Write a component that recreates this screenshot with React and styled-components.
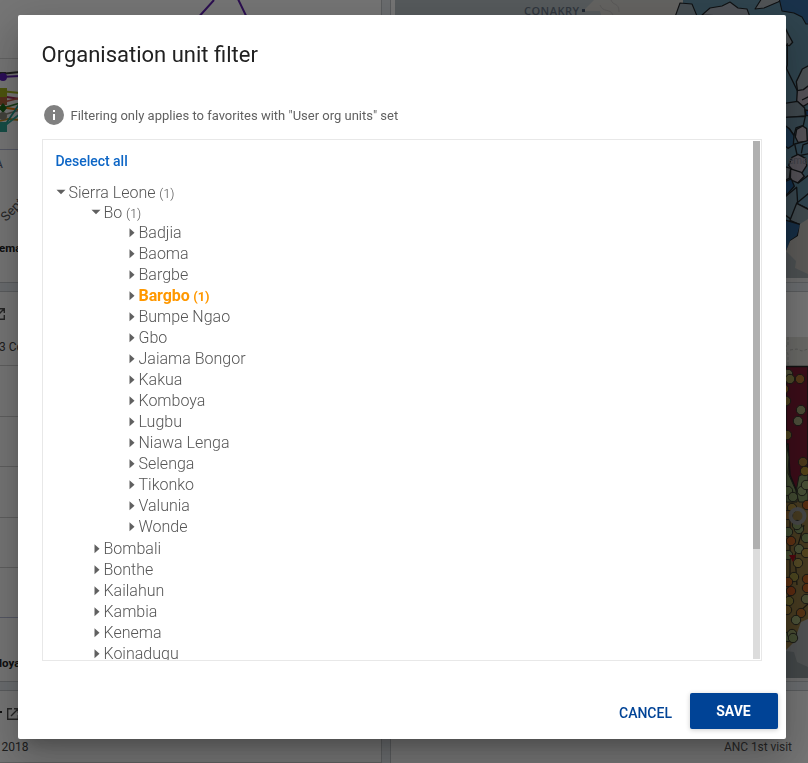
import React from "react";
import styled, { createGlobalStyle, css } from "styled-components";

const GlobalStyle = createGlobalStyle`
  *, *::before, *::after { box-sizing: border-box; }
  body { margin: 0; overflow: hidden; font-family: Roboto, sans-serif; }
`;

const Page = styled.div`
  height: 100vh;
  overflow: hidden;
  background: #e8edf2;
`;

const Dashboard = styled.main`
  display: grid;
  grid-template-columns: 382px 1fr;
  grid-template-rows: 283px 391px 1fr;
  gap: 8px;
  height: 100%;
`;

const Panel = styled.section`
  overflow: hidden;
  background: #fff;
  border: solid #c4c8cc;
  border-width: ${(p) => (p.$side === "left" ? "1px 1px 1px 0" : "1px 0 1px 1px")};
  ${(p) => p.$top && css`border-top: 0;`}
  ${(p) => p.$bottom && css`border-bottom: 0;`}
  min-width: 0;
  min-height: 0;
`;

const Drawing = styled.svg`
  display: block;
  width: 100%;
  height: 100%;
  font-family: Roboto, sans-serif;
`;

const Scrim = styled.div`
  position: fixed;
  inset: 0;
  display: flex;
  align-items: flex-start;
  padding: 15px 22px 24px 18px;
  background: rgba(0, 0, 0, 0.54);
`;

const Dialog = styled.div`
  display: flex;
  flex-direction: column;
  width: 768px;
  height: 724px;
  border-radius: 2px;
  background: #fff;
  box-shadow: 0 11px 15px -7px rgba(0, 0, 0, 0.2), 0 24px 38px 3px rgba(0, 0, 0, 0.14),
    0 9px 46px 8px rgba(0, 0, 0, 0.12);
`;

const Title = styled.h2`
  margin: 0;
  padding: 25px 24px 0 23.5px;
  height: 86px;
  font-size: 22px;
  font-weight: 400;
  line-height: 30px;
  color: #212121;
`;

const Hint = styled.div`
  display: flex;
  align-items: center;
  gap: 4.5px;
  height: 28px;
  padding-left: 24px;
  font-size: 13px;
  color: #616161;

  svg { width: 24px; height: 24px; fill: #808080; }
`;

const TreeBox = styled.div`
  display: flex;
  justify-content: space-between;
  height: 522px;
  margin: 10px 24px 0;
  padding: 1px 1px 1px 0;
  border: 1px solid #e8e8e8;
  overflow: hidden;
`;

const TreeContent = styled.div`
  height: 519px;
  padding: 11px 0 0 12.5px;
  overflow: hidden;
`;

const Deselect = styled.button`
  display: block;
  height: 18px;
  padding: 0;
  margin-bottom: 12px;
  border: 0;
  background: none;
  font: 500 14px/18px Roboto, sans-serif;
  letter-spacing: -0.03px;
  color: #0d66c6;
`;

const Scrollbar = styled.div`
  width: 7px;
  height: 518px;
  background: #dcdcdc;
`;

const Thumb = styled.div`
  height: 408px;
  background: #b0b0b0;
`;

const Branch = styled.div`
  padding-left: ${(p) => (p.$root ? 0 : 35)}px;
  padding-bottom: ${(p) => (p.$spaced ? 1 : 0)}px;
`;

const Row = styled.div`
  display: flex;
  align-items: center;
  height: ${(p) => (p.$open ? 20 : 21)}px;
  font-size: 16px;
  font-weight: ${(p) => (p.$selected ? 700 : 300)};
  color: ${(p) => (p.$selected ? "#ff9800" : "#555")};
  letter-spacing: ${(p) => (p.$selected ? "-0.08px" : "normal")};
  white-space: pre;

  svg { width: 12px; height: 10px; margin-right: 1px; fill: #606060; }
`;

const Count = styled.span`
  margin-top: 2px;
  margin-left: 0.5px;
  font-size: 12.8px;
`;

const Actions = styled.div`
  display: flex;
  align-items: center;
  justify-content: flex-end;
  margin-top: auto;
  padding: 0 8px 10px;
`;

const Button = styled.button`
  height: 36px;
  padding: ${(p) => (p.$primary ? "0 1px 1px 0" : "3px 1px 0 0")};
  width: 88px;
  border: 0;
  border-radius: 2px;
  font: ${(p) => (p.$primary ? 700 : 500)} 14px Roboto, sans-serif;
  background: ${(p) => (p.$primary ? "#004396" : "transparent")};
  color: ${(p) => (p.$primary ? "#fff" : "#004396")};
  box-shadow: ${(p) => (p.$primary ? "0 1px 5px rgba(0,0,0,.2)" : "none")};
`;

const Caret = ({ open }) => (
  <svg viewBox="0 0 12 10" aria-hidden="true">
    <path d={open ? "M.5 2.7h9L5 7.3z" : "M3.5 .3l5 4.5-5 4.5z"} />
  </svg>
);

const tree = {
  name: "Sierra Leone",
  count: 1,
  children: [
    {
      name: "Bo",
      count: 1,
      children: [
        "Badjia", "Baoma", "Bargbe", { name: "Bargbo", count: 1, selected: true },
        "Bumpe Ngao", "Gbo", "Jaiama Bongor", "Kakua", "Komboya", "Lugbu",
        "Niawa Lenga", "Selenga", "Tikonko", "Valunia", "Wonde",
      ],
    },
    "Bombali", "Bonthe", "Kailahun", "Kambia", "Kenema", "Koinadugu",
  ],
};

function Unit({ unit, depth = 0 }) {
  const { name, count, children, selected } = typeof unit === "string" ? { name: unit } : unit;
  return (
    <Branch $root={depth === 0} $spaced={depth === 1 && !!children}>
      <Row $open={!!children} $selected={selected}>
        <Caret open={!!children} />
        {name}
        {count && <Count>{` (${count})`}</Count>}
      </Row>
      {children && children.map((c) => <Unit key={c.name || c} unit={c} depth={depth + 1} />)}
    </Branch>
  );
}

const LaunchIcon = ({ x, y }) => (
  <path
    transform={`translate(${x} ${y})`}
    d="M5 .7H.7v10.6h10.6V7M7 .7h4.3V5M11 1L4 8"
    fill="none"
    stroke="#505050"
    strokeWidth="1.4"
  />
);

const LineChart = () => (
  <Drawing viewBox="0 0 381 282" preserveAspectRatio="xMinYMin slice">
    <path d="M0 58.5h381" stroke="#d8d8d8" />
    <path d="M0 149.5h381" stroke="#b8bdd8" />
    <path d="M196 20l18-20M237 -3l14 29" fill="none" stroke="#6020b0" strokeWidth="2" />
    <g fill="none" strokeWidth="1.8">
      <path d="M0 74l20-2" stroke="#404040" />
      <path d="M0 77l20-1" stroke="#6020b0" />
      <path d="M0 91l20 2" stroke="#a8b820" />
      <path d="M0 96l20 3" stroke="#b03060" />
      <path d="M0 103l20-5" stroke="#d06050" />
      <path d="M0 109l20-6" stroke="#308030" />
      <path d="M0 107l20 3" stroke="#ff8000" />
      <path d="M0 116l20-6" stroke="#909080" />
      <path d="M0 121l8-2 12 1" stroke="#d09020" />
      <path d="M3 127l17-13" stroke="#30b0a0" />
      <path d="M3 128l17-25" stroke="#20a090" />
    </g>
    <path d="M-3 72h9v3h-9z" fill="#404040" />
    <circle cx="3" cy="77" r="4" fill="#6020c0" />
    <path d="M-2 88h9v9h-9z" fill="#a8b820" />
    <path d="M-2 97h9v8h-9z" fill="#b86840" />
    <path d="M3 103l4 5-4 5-4-5z" fill="#207020" />
    <circle cx="3" cy="116" r="4" fill="#909080" />
    <path d="M-2 122h9v10h-9z" fill="#30a898" />
    <text x="-5" y="168" fontSize="12" fill="#506078">A</text>
    <text x="6" y="222" fontSize="13" fill="#555" transform="rotate(-45 6 222)">Sept</text>
    <text x="-1" y="252" fontSize="11.5" fontWeight="700" fill="#222">ema</text>
  </Drawing>
);

const ColumnChart = () => (
  <Drawing viewBox="0 292 381 389" preserveAspectRatio="xMinYMin slice">
    <LaunchIcon x={-7} y={308} />
    <text x="-1" y="351" fontSize="12" fill="#444">3 Co</text>
    <path d="M0 365.5h381M0 416.5h381M0 466.5h381M0 517.5h381M0 567.5h381" stroke="#cfcfcf" />
    <path d="M0 617.5h381" stroke="#b8bdd8" />
    <text x="-1" y="667" fontSize="11.5" fontWeight="700" fill="#222">loya</text>
  </Drawing>
);

const FooterChart = () => (
  <Drawing viewBox="0 691 381 80" preserveAspectRatio="xMinYMin slice">
    <path d="M0 711h2v2H0z" fill="#222" />
    <LaunchIcon x={7} y={708} />
    <text x="1.5" y="751" fontSize="12" fill="#444">2018</text>
    <path d="M0 762.5h381" stroke="#d0d0d0" />
  </Drawing>
);

const DistrictMap = () => (
  <Drawing viewBox="391 0 417 282" preserveAspectRatio="xMinYMin slice">
    <path d="M395 0h413v278H395z" fill="#bcc5c9" />
    <path d="M583 11l11-11h90v25h-80l-4-14z" fill="#dad8d4" />
    <path d="M600 5c3 8 10 3 13 10M611 0c2 6 8 2 8 12" fill="none" stroke="#c4c2c0" />
    <text x="524" y="15" fontSize="11" fontWeight="600" fontFamily="Open Sans, sans-serif" fill="#6a7788" textLength="55">CONAKRY</text>
    <path d="M582 9h3v3h-3z" fill="#4a5a70" />
    <path d="M683 0h125v278H683z" fill="#6794aa" />
    <g stroke="#202428" strokeWidth="1.1" strokeLinejoin="round">
      <path d="M675 17l5-14 12 1 5 12z" fill="#98a8b2" />
      <path d="M702 15l8-7 12-2 8-4 8 6 9 1 3 8z" fill="#aeb5bf" />
      <path d="M755 9l7-11h24l-8 4-14 6z" fill="#b0b8bd" />
      <path d="M779-2l3 13 12 2 8 4 4 7h3V-2z" fill="#376da2" />
    </g>
    <g transform="translate(748 0) scale(.3333)" stroke="#202428" strokeWidth="4" strokeLinejoin="round">
      <path d="M110 80l12 25 12 22-10 10-14-2z" fill="#a4b0b6" />
      <path d="M118 130v65l-3 10 32 65 35-72" fill="none" />
      <path d="M185 195l-22 12-18 38 4 32 36 18z" fill="#a2b0b8" />
      <path d="M148 272l-2 32 20 15 20-12v-53l-20 15z" fill="#b9b1be" />
      <path d="M110 310l38-6 22 20 2 24-60 5z" fill="#899ca8" />
      <path d="M110 352l62-3-6 27-22 8-6 22-14-20-14-8z" fill="#7194a8" />
      <path d="M110 375l14 12 14 20-2 28-16 10-10-8z" fill="#3b72a0" />
      <path d="M146 388l18-10 12 8 2 38-28 3-8-16z" fill="#b9b2bd" />
      <path d="M172 330l16 3v14h-14z" fill="#245a9a" />
      <path d="M140 432l8 36 40-8v-40z" fill="#6793ae" />
      <path d="M122 496l10-24 18-9 23 12 3 22-14 22-26-6z" fill="#b5aebc" />
      <path d="M110 500l18 5-4 30-14 6z" fill="#8d9ba4" />
      <path d="M128 507l32 10 9 12-20 20-22-10z" fill="#b5afbc" />
      <path d="M110 545l20-8 9 22-25 28z" fill="#29639c" />
      <path d="M112 590l34-28 3 48-20 48-19-14z" fill="#7797a8" />
      <path d="M146 610l38-32v50z" fill="#6794ad" />
      <path d="M146 610l38 20v30l-26 15-32-14z" fill="#8ba0aa" />
      <path d="M110 660l48 14-10 34-20 14-10 27-8 5z" fill="#316497" />
      <path d="M162 300l24-12M160 460l5-25 20-8M150 550l36-28" fill="none" />
    </g>
    <path d="M786 251l4-10 8-5 2-12 8-5v59h-22z" fill="#c8c5c0" />
    <path d="M786 251l10 10-1 7 13 6v4h-22z" fill="#a6aeb2" />
    <text x="788" y="164" fontSize="10" fill="#858a98">ema</text>
    <path d="M391 280h417" stroke="#efefef" strokeWidth="4" />
  </Drawing>
);

const facilities = [
  [788, 374, "#acac7c"], [790, 379, "#a8a058"], [800, 379, "#b97835"], [784, 389, "#b98030"],
  [786, 401, "#a98d45"], [801, 410, "#a5a575"], [798, 421, "#a9aa80"], [787, 435, "#a49045"],
  [803, 462, "#a97b38"], [805, 471, "#b79032"], [788, 491, "#8fa66a"], [793, 497, "#8fa36c"],
  [802, 491, "#9caf78"], [806, 485, "#9fad75"], [807, 505, "#c46525"], [792, 508, "#b99845"],
  [788, 515, "#a9793b"], [799, 529, "#8fa36c"], [797, 525, "#8fa36c"], [788, 532, "#90a66c"],
  [791, 541, "#cd6b2a"], [799, 549, "#a0ad75"], [788, 555, "#94a76d"], [798, 563, "#b8a050"],
  [806, 538, "#8fa66a"], [806, 553, "#b99845"], [794, 577, "#a99b45"], [807, 579, "#c76525"],
  [788, 582, "#c76b2a"], [791, 591, "#c85d24"], [806, 599, "#a2aa72"], [789, 601, "#aa9d48"],
  [801, 613, "#bd722e"], [796, 620, "#a5b27a"], [788, 637, "#94a76d"], [792, 634, "#a0aa70"],
  [793, 638, "#94a76d"], [807, 588, "#c76525"], [787, 610, "#b28a3d"],
];

const FacilityMap = () => (
  <Drawing viewBox="391 292 417 389" preserveAspectRatio="xMinYMin slice">
    <path d="M395 337h413v29H395z" fill="#e5e4de" />
    <path d="M788 337v9h-4l4 8v12M790 350l7-1 5 2 6-2" fill="none" stroke="#bcbdb9" strokeDasharray="3 2" />
    <path d="M395 366h413v312H395z" fill="#9a8047" />
    <path d="M786 366.5h22V476l-8 2-3 14-7-17-2-31h-2z" fill="#821c36" stroke="#262626" strokeWidth="1.5" />
    <path d="M786 443l3 14-1 16 9 20v9h-11zM799 502l-3-10 3-16 9-4v30z" fill="#899e68" stroke="#30352c" />
    <path d="M790 520v65l-3 25M804 525l-9 30 2 30M808 604l-9 8" fill="none" stroke="#343022" strokeWidth="1.2" />
    <path d="M786 650l7-7 3-7 5-14 7-3v59h-22z" fill="#b0b5b7" />
    <path d="M786 651l8 1 3 10 11 5v11h-22z" fill="#929c9f" />
    {facilities.map(([x, y, fill]) => (
      <circle key={`${x}-${y}`} cx={x} cy={y} r="4.7" fill={fill} stroke="#35352c" />
    ))}
    <circle cx="797.5" cy="516" r="7" fill="none" stroke="#9a9a9a" strokeWidth="4" />
    <path d="M789 555l7 0-3 7z" fill="#b01020" />
    <path d="M391 680h417" stroke="#efefef" strokeWidth="4" />
  </Drawing>
);

const VisitChart = () => (
  <Drawing viewBox="391 691 417 80" preserveAspectRatio="xMinYMin slice">
    <text x="724" y="751" fontSize="12" fill="#555" textLength="68">ANC 1st visit</text>
  </Drawing>
);

export default function App() {
  return (
    <Page>
      <GlobalStyle />
      <Dashboard>
        <Panel $side="left" $top><LineChart /></Panel>
        <Panel $side="right" $top><DistrictMap /></Panel>
        <Panel $side="left"><ColumnChart /></Panel>
        <Panel $side="right"><FacilityMap /></Panel>
        <Panel $side="left" $bottom><FooterChart /></Panel>
        <Panel $side="right" $bottom><VisitChart /></Panel>
      </Dashboard>
      <Scrim>
        <Dialog role="dialog" aria-labelledby="filter-title">
          <Title id="filter-title">Organisation unit filter</Title>
          <Hint>
            <svg viewBox="0 0 24 24" aria-hidden="true">
              <path d="M12 2a10 10 0 100 20 10 10 0 000-20zm1 15h-2v-6h2v6zm0-8h-2V7h2v2z" />
            </svg>
            Filtering only applies to favorites with "User org units" set
          </Hint>
          <TreeBox>
            <TreeContent>
              <Deselect>Deselect all</Deselect>
              <Unit unit={tree} />
            </TreeContent>
            <Scrollbar><Thumb /></Scrollbar>
          </TreeBox>
          <Actions>
            <Button>CANCEL</Button>
            <Button $primary>SAVE</Button>
          </Actions>
        </Dialog>
      </Scrim>
    </Page>
  );
}
